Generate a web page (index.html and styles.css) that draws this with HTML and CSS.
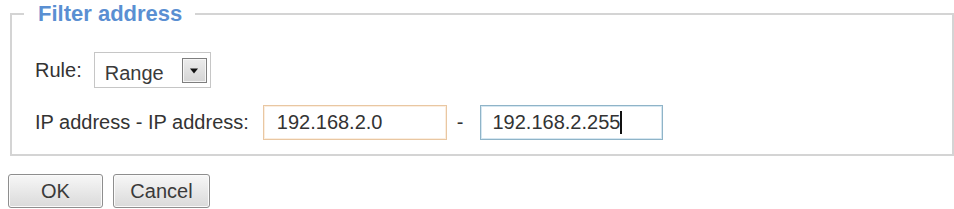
FILE: index.html
```html
<!DOCTYPE html>
<html>
<head>
<meta charset="utf-8">
<link rel="stylesheet" href="styles.css">
</head>
<body>
<fieldset class="group">
  <legend class="group-title">Filter address</legend>
  <div class="rows">
    <div class="row">
      <span class="label">Rule:</span>
      <div class="select">
        <span class="select-value">Range</span>
        <span class="select-btn"><svg width="10" height="6" viewBox="0 0 10 6"><path d="M1 0.5 H9 L5 5.5 Z" fill="#111"/></svg></span>
      </div>
    </div>
    <div class="row">
      <span class="label label-ip">IP address - IP address:</span>
      <div class="textbox textbox-from">192.168.2.0</div>
      <span class="dash">-</span>
      <div class="textbox textbox-to">192.168.2.255<span class="caret"></span></div>
    </div>
  </div>
</fieldset>
<div class="actions">
  <button class="btn btn-ok">OK</button>
  <button class="btn btn-cancel">Cancel</button>
</div>
</body>
</html>
```
FILE: styles.css
```css
html, body {
  margin: 0;
  padding: 0;
  background: #ffffff;
}
body {
  font-family: "Liberation Sans", Arial, sans-serif;
  font-size: 20px;
  color: #333333;
}
.group {
  margin: 2px 0 0 10px;
  padding: 26px 12px 14px 12px;
  border: 2px solid #d4d4d4;
  min-width: 0;
}
.group-title {
  padding: 0 13px 0 14px;
  font-size: 22px;
  font-weight: bold;
  line-height: 24px;
  color: #5a8fd2;
}
.rows {
  margin-left: 11px;
  display: flex;
  flex-direction: column;
  gap: 17px;
}
.row {
  display: flex;
  align-items: center;
}
.label {
  margin-right: 12px;
  line-height: 23px;
}
.label-ip {
  margin-right: 14px;
}
.select {
  box-sizing: border-box;
  width: 117px;
  height: 36px;
  border: 1px solid #c6c6c6;
  display: flex;
  align-items: center;
  justify-content: space-between;
  padding: 0 3px 0 10px;
  background: #fff;
}
.select-value {
  margin-top: 6px;
  color: #3a3a3a;
}
.select-btn {
  box-sizing: border-box;
  width: 25px;
  height: 25px;
  border: 1px solid #7e7e7e;
  background: linear-gradient(#ececec, #d4d4d4);
  display: flex;
  align-items: center;
  justify-content: center;
  box-shadow: inset 0 0 0 1px #f6f6f6;
}
.select-btn svg {
  display: block;
  margin-top: 2px;
}
.textbox {
  box-sizing: border-box;
  width: 184px;
  height: 35px;
  padding: 0 13px;
  display: flex;
  align-items: center;
  background: #fff;
  color: #333;
}
.textbox-from {
  border: 1px solid #e9c7a2;
  box-shadow: inset 0 0 0 1px #fbeee0;
}
.textbox-to {
  width: 183px;
  padding-left: 12px;
  border: 1px solid #8fb4c8;
  box-shadow: inset 0 0 0 1px #d6e7f1;
}
.caret {
  display: inline-block;
  width: 2px;
  height: 23px;
  background: #111;
}
.dash {
  margin: 0 16px 0 10px;
}
.actions {
  margin: 18px 0 0 8px;
  display: flex;
  gap: 10px;
}
.btn {
  box-sizing: border-box;
  height: 34px;
  border: 1px solid #8e8e8e;
  border-radius: 3px;
  background: linear-gradient(#f7f7f7, #dadada);
  font-family: "Liberation Sans", Arial, sans-serif;
  font-size: 20px;
  color: #3a3a3a;
  padding: 0;
  box-shadow: inset 0 0 0 1px #fbfbfb;
}
.btn-ok {
  width: 95px;
}
.btn-cancel {
  width: 97px;
}
```
